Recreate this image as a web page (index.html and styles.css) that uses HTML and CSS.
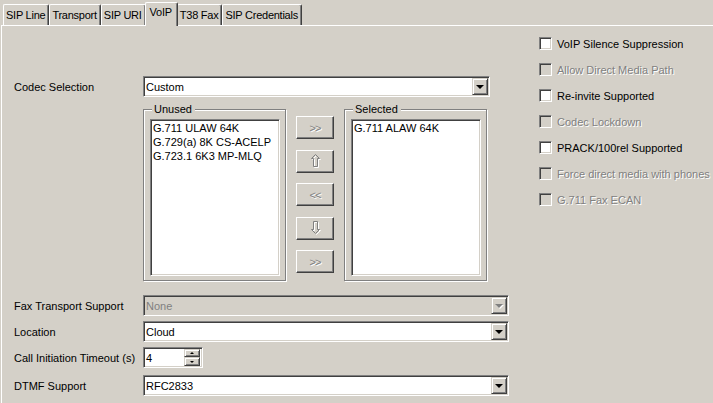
FILE: index.html
```html
<!DOCTYPE html>
<html>
<head>
    <title>VoIP Settings</title>
    <link rel="stylesheet" href="styles.css">
</head>
<body>
    <!-- Tab strip -->
    <div class="tabs">
        <div class="tab">SIP Line</div>
        <div class="tab">Transport</div>
        <div class="tab">SIP URI</div>
        <div class="tab active">VoIP</div>
        <div class="tab">T38 Fax</div>
        <div class="tab">SIP Credentials</div>
    </div>

    <div class="panel">
        <!-- Left side: codecs and combos -->
        <div class="form">
            <div class="row codec-row">
                <label class="label">Codec Selection</label>
                <div class="combo codec-combo">
                    <span class="combo-text">Custom</span>
                    <span class="drop"><span class="tri"></span></span>
                </div>
            </div>

            <div class="lists">
                <div class="group">
                    <span class="legend">Unused</span>
                    <div class="listbox">
                        <div class="item">G.711 ULAW 64K</div>
                        <div class="item">G.729(a) 8K CS-ACELP</div>
                        <div class="item">G.723.1 6K3 MP-MLQ</div>
                    </div>
                </div>

                <div class="movers">
                    <button class="btn" disabled><span class="glyph">&gt;&gt;</span></button>
                    <button class="btn" disabled>
                        <svg width="11" height="15" viewBox="0 0 11 15">
                            <path d="M6.5 1.5 L10.5 5.5 L8.5 5.5 L8.5 13.5 L4.5 13.5 L4.5 5.5 L2.5 5.5 Z" fill="none" stroke="#fff"/>
                            <path d="M5.5 0.5 L9.5 4.5 L7.5 4.5 L7.5 12.5 L3.5 12.5 L3.5 4.5 L1.5 4.5 Z" fill="none" stroke="#808080"/>
                        </svg>
                    </button>
                    <button class="btn" disabled><span class="glyph">&lt;&lt;</span></button>
                    <button class="btn" disabled>
                        <svg width="11" height="15" viewBox="0 0 11 15">
                            <path d="M4.5 1.5 L8.5 1.5 L8.5 9.5 L10.5 9.5 L6.5 13.5 L2.5 9.5 L4.5 9.5 Z" fill="none" stroke="#fff"/>
                            <path d="M3.5 0.5 L7.5 0.5 L7.5 8.5 L9.5 8.5 L5.5 12.5 L1.5 8.5 L3.5 8.5 Z" fill="none" stroke="#808080"/>
                        </svg>
                    </button>
                    <button class="btn" disabled><span class="glyph">&gt;&gt;</span></button>
                </div>

                <div class="group">
                    <span class="legend">Selected</span>
                    <div class="listbox">
                        <div class="item">G.711 ALAW 64K</div>
                    </div>
                </div>
            </div>

            <div class="row fax-row">
                <label class="label">Fax Transport Support</label>
                <div class="combo wide disabled">
                    <span class="combo-text">None</span>
                    <span class="drop"><span class="tri"></span></span>
                </div>
            </div>

            <div class="row">
                <label class="label">Location</label>
                <div class="combo wide">
                    <span class="combo-text">Cloud</span>
                    <span class="drop"><span class="tri"></span></span>
                </div>
            </div>

            <div class="row">
                <label class="label">Call Initiation Timeout (s)</label>
                <div class="combo spin">
                    <span class="combo-text">4</span>
                    <span class="spin-btns">
                        <span class="spin-btn"><span class="tri-up"></span></span>
                        <span class="spin-btn"><span class="tri-sm"></span></span>
                    </span>
                </div>
            </div>

            <div class="row dtmf-row">
                <label class="label">DTMF Support</label>
                <div class="combo wide">
                    <span class="combo-text">RFC2833</span>
                    <span class="drop"><span class="tri"></span></span>
                </div>
            </div>
        </div>

        <!-- Right side: checkboxes -->
        <div class="checks">
            <div class="check"><span class="box"></span>VoIP Silence Suppression</div>
            <div class="check off"><span class="box"></span>Allow Direct Media Path</div>
            <div class="check"><span class="box"></span>Re-invite Supported</div>
            <div class="check off"><span class="box"></span>Codec Lockdown</div>
            <div class="check"><span class="box"></span>PRACK/100rel Supported</div>
            <div class="check off"><span class="box"></span>Force direct media with phones</div>
            <div class="check off"><span class="box"></span>G.711 Fax ECAN</div>
        </div>
    </div>
</body>
</html>
```

FILE: styles.css
```css
body {
    margin: 0;
    width: 713px;
    height: 403px;
    overflow: hidden;
    background-color: #d4d0c8;
    font-family: "Liberation Sans", Arial, sans-serif;
    font-size: 11px;
    color: #000;
}

/* Tabs */
.tabs {
    display: flex;
    align-items: flex-end;
    height: 25px;
    padding-left: 3px;
}

.tab {
    height: 20px;
    line-height: 20px;
    padding: 0 3px 0 2px;
    border-top: 1px solid #fff;
    border-left: 1px solid #fff;
    border-right: 1px solid #404040;
    border-radius: 2px 2px 0 0;
    box-shadow: inset -1px 0 #808080;
    letter-spacing: -0.25px;
    white-space: nowrap;
}

.tab.active {
    position: relative;
    height: 23px;
    line-height: 18px;
    margin: 0 -1px -1px;
    padding: 0 5px 0 4px;
    background-color: #d4d0c8;
}

/* Panel */
.panel {
    display: flex;
    margin-left: 1px;
    height: 377px;
    border-top: 1px solid #fff;
    border-left: 1px solid #fff;
}

.form {
    width: 525px;
    padding-left: 12px;
}

.row {
    display: flex;
    align-items: center;
    height: 21px;
    margin-top: 5px;
}

.codec-row {
    margin-top: 50px;
}

.fax-row {
    margin-top: 14px;
}

.dtmf-row {
    margin-top: 7px;
}

.label {
    width: 129px;
    flex-shrink: 0;
}

/* Sunken combo boxes */
.combo {
    box-sizing: border-box;
    display: flex;
    align-items: center;
    height: 21px;
    border: 1px solid;
    border-color: #808080 #fff #fff #808080;
    box-shadow: inset 1px 1px #404040, inset -1px -1px #d4d0c8;
    background-color: #fff;
}

.codec-combo {
    width: 347px;
}

.wide {
    width: 366px;
}

.combo-text {
    flex: 1;
    padding-left: 2px;
}

.drop {
    box-sizing: border-box;
    display: flex;
    align-items: center;
    justify-content: center;
    width: 16px;
    height: 17px;
    margin-right: 1px;
    border: 1px solid;
    border-color: #d4d0c8 #404040 #404040 #d4d0c8;
    box-shadow: inset 1px 1px #fff, inset -1px -1px #808080;
    background-color: #d4d0c8;
}

.tri {
    width: 0;
    height: 0;
    border-left: 4px solid transparent;
    border-right: 4px solid transparent;
    border-top: 4px solid #000;
    margin-top: 1px;
}

.combo.disabled {
    background-color: #d4d0c8;
    color: #808080;
}

.combo.disabled .tri {
    border-top-color: #808080;
    filter: drop-shadow(1px 1px 0 #fff);
}

/* Spinner */
.spin {
    width: 60px;
}

.spin-btns {
    display: flex;
    flex-direction: column;
    margin-right: 2px;
}

.spin-btn {
    box-sizing: border-box;
    display: flex;
    align-items: center;
    justify-content: center;
    width: 16px;
    height: 8px;
    border: 1px solid;
    border-color: #d4d0c8 #404040 #404040 #d4d0c8;
    box-shadow: inset 1px 1px #fff, inset -1px -1px #808080;
    background-color: #d4d0c8;
}

.spin-btn + .spin-btn {
    height: 9px;
}

.tri-up {
    width: 0;
    height: 0;
    border-left: 2px solid transparent;
    border-right: 2px solid transparent;
    border-bottom: 2px solid #000;
}

.tri-sm {
    width: 0;
    height: 0;
    border-left: 2px solid transparent;
    border-right: 2px solid transparent;
    border-top: 2px solid #000;
}

/* Codec lists */
.lists {
    display: flex;
    margin: 12px 0 0 129px;
}

.group {
    position: relative;
    box-sizing: border-box;
    width: 143px;
    height: 172px;
    padding: 9px 0 0 6px;
    border: 1px solid #808080;
    box-shadow: inset 1px 1px #fff, 1px 1px #fff;
}

.legend {
    position: absolute;
    top: -8px;
    left: 8px;
    padding: 0 3px 0 2px;
    line-height: 14px;
    background-color: #d4d0c8;
}

.listbox {
    box-sizing: border-box;
    width: 130px;
    height: 157px;
    padding: 1px 0 0 2px;
    border: 1px solid;
    border-color: #808080 #fff #fff #808080;
    box-shadow: inset 1px 1px #404040, inset -1px -1px #d4d0c8;
    background-color: #fff;
}

.item {
    line-height: 14px;
    white-space: nowrap;
}

.movers {
    display: flex;
    flex-direction: column;
    gap: 10.5px;
    margin: 7px 10px 0 10px;
}

.btn {
    box-sizing: border-box;
    display: flex;
    align-items: center;
    justify-content: center;
    width: 38px;
    height: 23px;
    padding: 0;
    border: 1px solid;
    border-color: #fff #404040 #404040 #fff;
    box-shadow: inset -1px -1px #808080;
    background-color: #d4d0c8;
    font-family: inherit;
    font-size: 11px;
}

.glyph {
    color: #808080;
    text-shadow: 1px 1px #fff;
    letter-spacing: -1px;
}

/* Checkboxes */
.checks {
    padding-top: 11px;
}

.check {
    display: flex;
    align-items: center;
    height: 13px;
    margin-bottom: 13px;
    white-space: nowrap;
}

.box {
    box-sizing: border-box;
    width: 13px;
    height: 13px;
    margin-right: 5px;
    border: 1px solid;
    border-color: #808080 #fff #fff #808080;
    box-shadow: inset 1px 1px #404040, inset -1px -1px #d4d0c8;
    background-color: #fff;
}

.check.off {
    color: #808080;
    text-shadow: 1px 1px #fff;
}

.check.off .box {
    background-color: #d4d0c8;
}
```
